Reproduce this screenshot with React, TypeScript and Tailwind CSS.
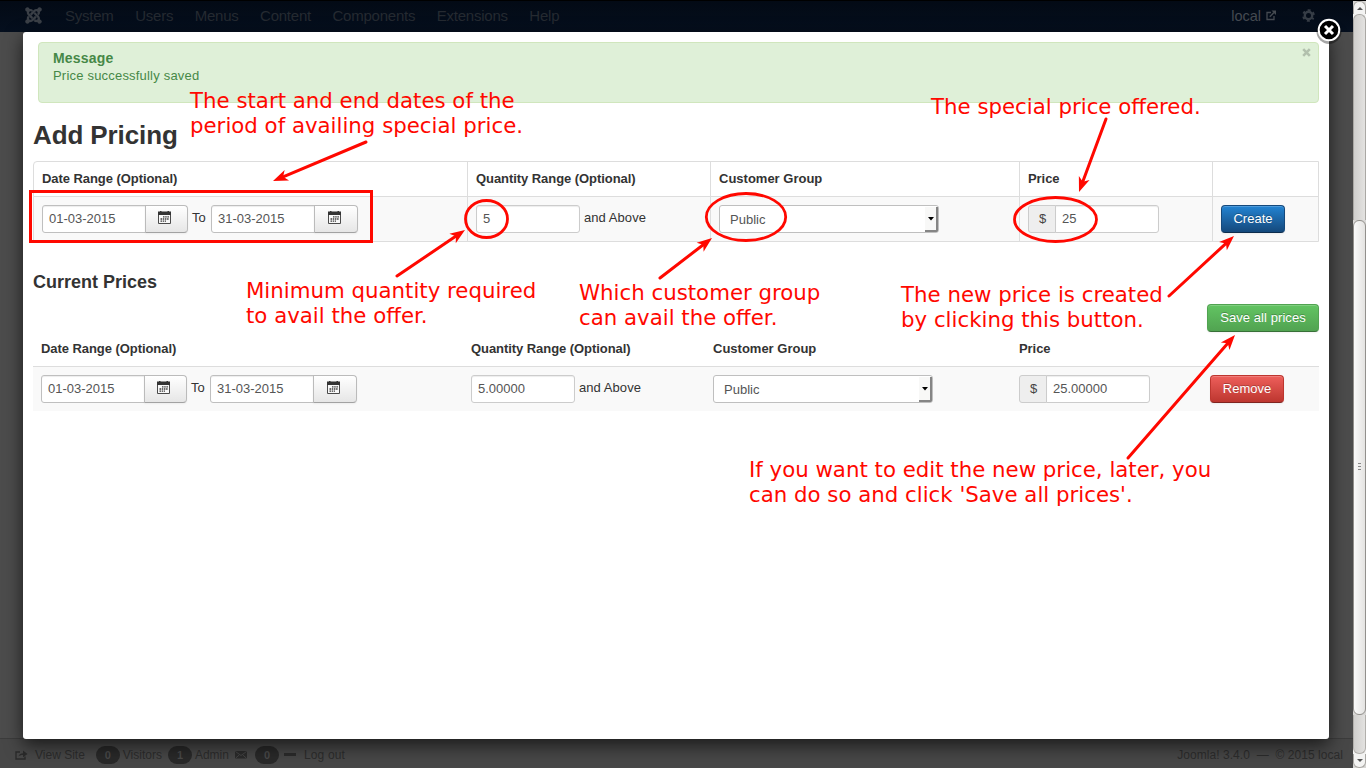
import React from "react";
import { FaJoomla } from "react-icons/fa";

function ExternalIcon({ className = "" }: { className?: string }) {
  return (
    <svg className={className} width="10" height="11" viewBox="0 0 10 11" fill="none" stroke="currentColor">
      <path d="M5 2.5H1v7h7V6" strokeWidth="1.3" />
      <path d="M3.8 6.8 8 2.4" strokeWidth="1.5" />
      <path d="M5.5.6H10v4.5z" fill="currentColor" stroke="none" />
    </svg>
  );
}

function GearIcon() {
  return (
    <svg width="13" height="13" viewBox="0 0 13 13" fill="none">
      <circle cx="6.5" cy="6.5" r="3.7" stroke="#363d46" strokeWidth="2.4" />
      <circle cx="6.5" cy="6.5" r="5.4" stroke="#363d46" strokeWidth="1.9" strokeDasharray="2.8 2.855" strokeDashoffset="1.4" transform="rotate(30 6.5 6.5)" />
    </svg>
  );
}

function CalendarIcon() {
  return (
    <svg width="13" height="13" viewBox="0 0 13 13">
      <path d="M0 .5h2V0h1.5v.5h6V0H11v.5h2V4H0z" fill="#333" />
      <path d="M.5 4v8.5h12V4" fill="#f8f8f8" stroke="#4a4a4a" />
      <path d="M5 5.9h6M2.5 8H11M2.5 10.1H8" stroke="#3b3b3b" strokeWidth="1.3" strokeDasharray="1.5 .7" />
    </svg>
  );
}

function ShareIcon() {
  return (
    <svg width="13" height="10" viewBox="0 0 13 10" fill="none" stroke="#2b2b2b">
      <path d="M5 2H1v7h9V6.5" strokeWidth="1.4" />
      <path d="M3.5 6.5C4 4 6 3.3 8 3.3V.4L12.5 4 8 7.2V5C6 5 4.5 5.5 3.5 6.5z" fill="#2b2b2b" stroke="none" />
    </svg>
  );
}

function MailIcon() {
  return (
    <svg width="12" height="9" viewBox="0 0 12 9">
      <rect y="1" width="12" height="7.5" rx=".8" fill="#2b2b2b" />
      <path d="M.5 1.5 6 5.5l5.5-4M.7 8l3.5-3M11.3 8 7.8 5" fill="none" stroke="#484848" strokeWidth=".9" />
    </svg>
  );
}

function DateField({ value, buttonWidth }: { value: string; buttonWidth: string }) {
  return (
    <div className="flex h-7">
      <div className="flex w-[104px] items-center rounded-l-[3px] border border-[#bfbfbf] bg-white pl-1.5 text-[#555] shadow-[inset_0_1px_1px_rgba(0,0,0,0.075)]">{value}</div>
      <div className={`-ml-px flex items-start justify-center rounded-r-[4px] border border-[#bbb] border-b-[#a2a2a2] bg-linear-to-b from-white to-[#e6e6e6] pt-[5px] pr-[4px] shadow-[0_1px_2px_rgba(0,0,0,0.05)] ${buttonWidth}`}>
        <CalendarIcon />
      </div>
    </div>
  );
}

function DateRange() {
  return (
    <div className="flex">
      <DateField value="01-03-2015" buttonWidth="w-[43px]" />
      <span className="w-[23px] pt-1 pl-1">To</span>
      <DateField value="31-03-2015" buttonWidth="w-[44px]" />
    </div>
  );
}

function Quantity({ value }: { value: string }) {
  return (
    <div className="flex">
      <div className="flex h-7 w-[104px] items-center rounded-[3px] border border-[#ccc] bg-white pl-1.5 text-[#555] shadow-[inset_0_1px_1px_rgba(0,0,0,0.075)]">{value}</div>
      <span className="pt-1 pl-1 tracking-[0.06px]">and Above</span>
    </div>
  );
}

function GroupSelect() {
  return (
    <div className="flex h-7 w-[220px] items-stretch justify-between rounded-[3px] border border-[#bfbfbf] bg-white pl-[10px] text-[#555]">
      <span className="pt-[5px]">Public</span>
      <div className="mt-px flex w-[13px] items-center justify-center rounded-br-[2px] border-r-2 border-b-2 border-[#858585] bg-[#f8f8f7]">
        <svg width="6" height="4" viewBox="0 0 6 4"><path d="M0 0h6L3 3.5z" fill="#000" /></svg>
      </div>
    </div>
  );
}

function PriceField({ value }: { value: string }) {
  return (
    <div className="flex h-7 w-[131px]">
      <div className="flex w-7 items-center justify-center rounded-l-[3px] border border-[#ccc] bg-[#eee] pl-px text-[#444]">$</div>
      <div className="-ml-px flex flex-1 items-center rounded-r-[3px] border border-[#ccc] bg-white pl-1.5 text-[#555] shadow-[inset_0_1px_1px_rgba(0,0,0,0.075)]">{value}</div>
    </div>
  );
}

const buttonBase =
  "flex h-7 items-center justify-center rounded-[4px] border bg-linear-to-b text-white [text-shadow:0_-1px_0_rgba(0,0,0,0.25)] shadow-[inset_0_1px_0_rgba(255,255,255,0.2),0_1px_2px_rgba(0,0,0,0.05)]";

const arrows: [number, number, number, number][] = [
  [366, 142, 273, 181],
  [1106, 119, 1079, 192],
  [397, 276, 465, 230],
  [660, 278, 712, 238],
  [1169, 296, 1234, 236],
  [1128, 458, 1235, 335],
];

function Arrow({ p }: { p: [number, number, number, number] }) {
  const [x1, y1, x2, y2] = p;
  const len = Math.hypot(x2 - x1, y2 - y1);
  const angle = (Math.atan2(y2 - y1, x2 - x1) * 180) / Math.PI;
  return (
    <g transform={`translate(${x2} ${y2}) rotate(${angle})`}>
      <path d={`M${-len} 0H-9`} stroke="#ff0800" strokeWidth="3" strokeLinecap="round" />
      <path d="M0 0-15-5.7-11 0-15 5.7z" fill="#ff0800" />
    </g>
  );
}

function Note({ className, children }: { className: string; children: React.ReactNode }) {
  return (
    <div className={`absolute font-['DejaVu_Sans',sans-serif] text-[21.3px] leading-[25px] whitespace-nowrap text-[#ff0800] ${className}`}>
      {children}
    </div>
  );
}

function Header() {
  return (
    <header className="flex h-8 items-center border-t border-black bg-linear-to-b from-[#030a15] to-[#050f1e] pb-[2px] pl-6 text-[15px] text-[#252a31]">
      <FaJoomla className="mr-[22px] text-[#3a3f46]" size={19} />
      <nav className="flex gap-[21.5px] tracking-[-0.23px]">
        <span>System</span><span>Users</span><span>Menus</span><span>Content</span>
        <span>Components</span><span>Extensions</span><span>Help</span>
      </nav>
      <div className="ml-auto flex items-center pr-[38px] text-[#454a51]">
        <span className="mr-[5px] text-[14.5px]">local</span>
        <ExternalIcon className="mr-[26px]" />
        <GearIcon />
      </div>
    </header>
  );
}

function Badge({ children }: { children: React.ReactNode }) {
  return <span className="mr-[3px] flex h-[18px] w-6 items-center justify-center rounded-[9px] bg-[#292929] text-[11px] font-bold text-[#484848]">{children}</span>;
}

function Footer() {
  return (
    <footer className="flex h-[30px] items-center border-t border-[#3c3c3c] bg-[#474747] pt-[2px] pr-[10px] pl-[15px] text-[12px] text-[#2c2c2c]">
      <ShareIcon />
      <span className="mr-[11px] ml-[7px]">View Site</span>
      <Badge>0</Badge><span className="mr-[6px]">Visitors</span>
      <Badge>1</Badge><span className="mr-[6px]">Admin</span>
      <MailIcon />
      <span className="w-2" />
      <Badge>0</Badge>
      <span className="ml-[2px] h-[3px] w-3 bg-[#2b2b2b]" />
      <span className="ml-2 tracking-[0.15px]">Log out</span>
      <span className="ml-auto tracking-[0.05px]">Joomla! 3.4.0 &nbsp;—&nbsp; © 2015 local</span>
    </footer>
  );
}

function Scrollbar() {
  return (
    <div className="flex h-full w-[13px] flex-col border-t border-black bg-[#d8d7d5]">
      <div className="flex h-[13px] items-center justify-center rounded-t-[6px] border border-b-0 border-[#aaa8a4] bg-[#f3f3f2]">
        <svg width="6" height="3" viewBox="0 0 6 3"><path d="M0 3h6L3 0z" fill="#555" /></svg>
      </div>
      <div className="flex h-[206px] bg-[#f3f3f2]">
        <div className="w-full rounded-t-[6px] border border-b-0 border-[#aaa8a4] bg-linear-to-r from-[#d0cfcd] to-[#e3e2e0]" />
      </div>
      <div className="flex h-[495px] flex-col items-center justify-center gap-[2px] rounded-[6px] border border-[#92908c] bg-linear-to-r from-[#fafafa] to-[#e4e3e1] pb-[2px]">
        <span className="h-px w-[3px] bg-[#888]" /><span className="h-px w-[3px] bg-[#888]" /><span className="h-px w-[3px] bg-[#888]" />
      </div>
      <div className="flex flex-1 bg-[#f3f3f2]">
        <div className="w-full rounded-b-[6px] border border-t-0 border-[#b2b0ac] bg-linear-to-r from-[#d0cfcd] to-[#e3e2e0]" />
      </div>
      <div className="flex h-[14px] items-center justify-center rounded-b-[6px] border border-t-0 border-[#aaa8a4] bg-[#f3f3f2]">
        <svg width="6" height="3" viewBox="0 0 6 3"><path d="M0 0h6L3 3z" fill="#555" /></svg>
      </div>
    </div>
  );
}

function Dialog() {
  return (
    <section className="absolute top-8 left-[23px] flex h-[707px] w-[1306px] flex-col rounded-[3px] bg-white px-[10px] pt-[10px] text-[#333] shadow-[0_6px_18px_rgba(0,0,0,0.65)]">
      <div className="ml-[5px] flex h-[61px] justify-between rounded-[4px] border border-[#d0e6bd] bg-[#dff0d8] pt-[6px] pr-[7px] pl-[14px] text-[#468847]">
        <div>
          <h4 className="text-[14px] leading-[18px] font-bold tracking-[0.2px]">Message</h4>
          <p className="leading-[18px] tracking-[0.2px]">Price successfully saved</p>
        </div>
        <svg className="-mt-px" width="9" height="9" viewBox="0 0 9 9"><path d="m1.2 1.2 6.6 6.6m0-6.6L1.2 7.8" stroke="#b2c0ad" strokeWidth="2.6" /></svg>
      </div>
      <h1 className="mt-[14px] h-[44px] text-[26px] leading-[36px] font-bold tracking-[-0.1px]">Add Pricing</h1>
      <div className="h-[81px] rounded-tl-[4px] border border-[#ddd]">
        <div className="grid h-[34px] grid-cols-[434px_243px_309px_193px_1fr] divide-x divide-[#ddd] font-bold tracking-[-0.06px] [&>*]:pt-2 [&>*]:pl-2">
          <div>Date Range (Optional)</div><div>Quantity Range (Optional)</div><div className="tracking-normal">Customer Group</div><div>Price</div><div />
        </div>
        <div className="grid h-[45px] grid-cols-[434px_243px_309px_193px_1fr] divide-x divide-[#ddd] border-t border-[#ddd] bg-[#f9f9f9] [&>*]:pt-2 [&>*]:pl-2">
          <div><DateRange /></div>
          <div><Quantity value="5" /></div>
          <div><GroupSelect /></div>
          <div><PriceField value="25" /></div>
          <div><button className={`${buttonBase} w-16 border-[#15497c] border-b-[#0d2d4d] from-[#2384d3] to-[#15497c]`}>Create</button></div>
        </div>
      </div>
      <h3 className="mt-[30px] h-[32px] text-[18px] leading-[20px] font-bold">Current Prices</h3>
      <button className={`${buttonBase} w-28 self-end border-[#51a351] border-b-[#387038] from-[#62c462] to-[#51a351] tracking-[0.07px]`}>Save all prices</button>
      <div className="grid h-[34px] grid-cols-[430px_242px_306px_191px_1fr] font-bold tracking-[-0.06px] [&>*]:pt-2 [&>*]:pl-2">
        <div>Date Range (Optional)</div><div>Quantity Range (Optional)</div><div className="tracking-normal">Customer Group</div><div>Price</div><div />
      </div>
      <div className="grid h-[45px] grid-cols-[430px_242px_306px_191px_1fr] border-t border-[#ddd] bg-[#f9f9f9] [&>*]:pt-2 [&>*]:pl-2">
        <div><DateRange /></div>
        <div><Quantity value="5.00000" /></div>
        <div><GroupSelect /></div>
        <div><PriceField value="25.00000" /></div>
        <div><button className={`${buttonBase} w-[74px] border-[#bd362f] border-b-[#802420] from-[#ee5f5b] to-[#bd362f]`}>Remove</button></div>
      </div>
    </section>
  );
}

export default function App() {
  return (
    <div className="relative flex h-[768px] w-[1366px] overflow-hidden bg-[#4c4c4c] font-['Liberation_Sans',Arial,sans-serif] text-[13px] leading-[18px]">
      <div className="relative flex w-[1353px] flex-col overflow-hidden">
        <Header />
        <main className="flex-1 bg-[#4c4c4c]" />
        <Footer />
        <Dialog />
        <svg className="absolute top-[16px] left-[1315px]" width="28" height="30" viewBox="0 0 28 30">
          <circle cx="14" cy="15.5" r="12.5" fill="#000" opacity=".35" />
          <circle cx="14" cy="14" r="10.3" fill="#000" stroke="#fff" strokeWidth="2" />
          <path d="m10 10 8 8m0-8-8 8" stroke="#fff" strokeWidth="3" />
        </svg>
      </div>
      <Scrollbar />
      <svg className="absolute inset-0" width="1366" height="768" viewBox="0 0 1366 768" fill="none">
        <rect x="30.5" y="191.5" width="341" height="50" stroke="#ff0800" strokeWidth="3" />
        <ellipse cx="486.5" cy="219" rx="21" ry="18.5" stroke="#ff0800" strokeWidth="2.8" />
        <ellipse cx="746" cy="217" rx="39.7" ry="23.5" stroke="#ff0800" strokeWidth="2.8" />
        <ellipse cx="1055.5" cy="219.5" rx="41" ry="22" stroke="#ff0800" strokeWidth="2.8" />
        {arrows.map((p, i) => <Arrow key={i} p={p} />)}
      </svg>
      <Note className="top-[88px] left-[190px]">The start and end dates of the<br />period of availing special price.</Note>
      <Note className="top-[94px] left-[931px]">The special price offered.</Note>
      <Note className="top-[278px] left-[246px]">Minimum quantity required<br />to avail the offer.</Note>
      <Note className="top-[280px] left-[579px]">Which customer group<br />can avail the offer.</Note>
      <Note className="top-[282px] left-[901px]">The new price is created<br />by clicking this button.</Note>
      <Note className="top-[457px] left-[749px]">If you want to edit the new price, later, you<br />can do so and click 'Save all prices'.</Note>
    </div>
  );
}
